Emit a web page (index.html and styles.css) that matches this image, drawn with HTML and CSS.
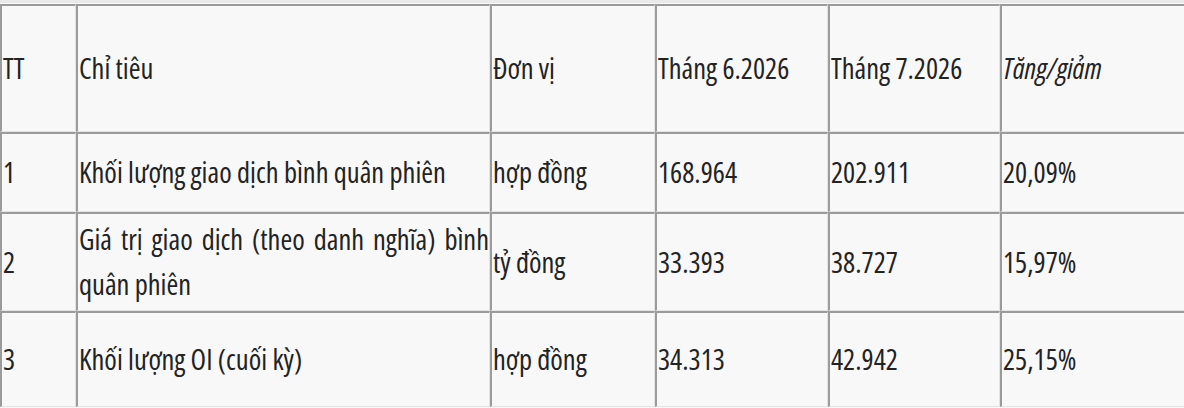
FILE: index.html
```html
<!DOCTYPE html>
<html lang="vi">
<head>
<meta charset="utf-8">
<title>Bảng số liệu</title>
<link rel="stylesheet" href="styles.css">
</head>
<body>
<div class="page">
  <table class="data">
    <tr class="row-head">
      <td class="c-tt">TT</td>
      <td class="c-name">Chỉ tiêu</td>
      <td class="c-unit">Đơn vị</td>
      <td class="c-m6">Tháng 6.2026</td>
      <td class="c-m7">Tháng 7.2026</td>
      <td class="c-chg"><em>Tăng/giảm</em></td>
    </tr>
    <tr class="row-1">
      <td>1</td>
      <td>Khối lượng giao dịch bình quân phiên</td>
      <td>hợp đồng</td>
      <td>168.964</td>
      <td>202.911</td>
      <td>20,09%</td>
    </tr>
    <tr class="row-2">
      <td>2</td>
      <td class="just">Giá trị giao dịch (theo danh nghĩa) bình quân phiên</td>
      <td>tỷ đồng</td>
      <td>33.393</td>
      <td>38.727</td>
      <td>15,97%</td>
    </tr>
    <tr class="row-3">
      <td>3</td>
      <td>Khối lượng OI (cuối kỳ)</td>
      <td>hợp đồng</td>
      <td>34.313</td>
      <td>42.942</td>
      <td>25,15%</td>
    </tr>
  </table>
</div>
</body>
</html>
```
FILE: styles.css
```css
html, body {
  margin: 0;
  padding: 0;
  background: #f8f8f8;
  overflow: hidden;
}

.page {
  border-top: 3px solid #eaeaea;
  padding-top: 1px;
  width: 1200px;
}

.data {
  border-collapse: separate;
  border-spacing: 0;
  table-layout: fixed;
  width: 1200px;
  font-family: "Open Sans", "Roboto", sans-serif;
  font-stretch: 75%;
  font-size: 28.5px;
  line-height: 45px;
  color: #232323;
}

.data td {
  box-sizing: border-box;
  border-top: 2px solid #9b9b9b;
  border-left: 2px solid #9b9b9b;
  border-right: 1px solid #e4e4e4;
  border-bottom: 1px solid #e4e4e4;
  padding: 0 0 0 1px;
  vertical-align: middle;
  text-align: left;
  font-weight: normal;
}

.data td em {
  font-style: italic;
}

.c-tt { width: 76px; }
.c-name { width: 414px; }
.c-unit { width: 165px; }
.c-m6 { width: 173px; }
.c-m7 { width: 172px; }
.c-chg { width: 200px; }

.row-head { height: 128px; }
.row-1 { height: 80px; }
.row-2 { height: 99px; }
.row-3 { height: 96px; }

.data td.just {
  text-align: justify;
}
```
